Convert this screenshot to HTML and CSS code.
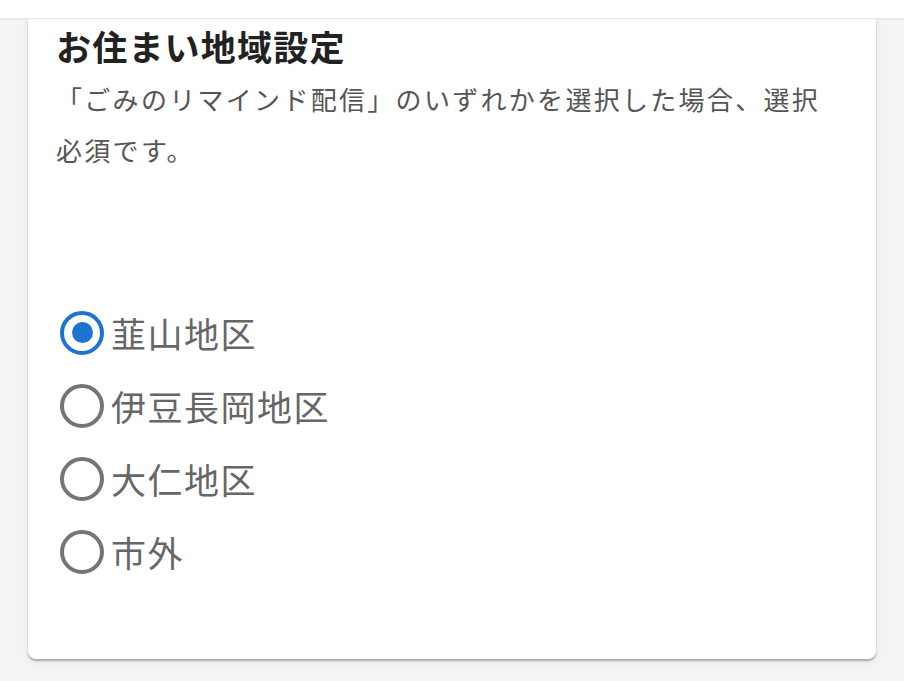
FILE: index.html
```html
<!DOCTYPE html>
<html lang="ja">
<head>
<meta charset="utf-8">
<link rel="stylesheet" href="styles.css">
</head>
<body>
<div class="topbar"></div>
<main class="page">
  <section class="card">
    <h2 class="title">お住まい地域設定</h2>
    <p class="desc">「ごみのリマインド配信」のいずれかを選択した場合、選択必須です。</p>
    <div class="options">
      <label class="option"><span class="radio checked"></span><span class="label">韮山地区</span></label>
      <label class="option"><span class="radio"></span><span class="label">伊豆長岡地区</span></label>
      <label class="option"><span class="radio"></span><span class="label">大仁地区</span></label>
      <label class="option"><span class="radio"></span><span class="label">市外</span></label>
    </div>
  </section>
</main>
</body>
</html>
```
FILE: styles.css
```css
html, body {
  margin: 0;
  padding: 0;
}
body {
  background: #f3f4f6;
  font-family: "Noto Sans CJK JP", "Noto Sans", sans-serif;
  width: 904px;
  height: 681px;
  overflow: hidden;
}
.topbar {
  height: 18px;
  background: #ffffff;
  border-bottom: 1px solid #e6e7ea;
  box-shadow: 0 1px 2px rgba(0,0,0,0.04);
  position: relative;
  z-index: 1;
}
.page {
  padding: 0 28px;
}
.card {
  background: #ffffff;
  border-radius: 0 0 8px 8px;
  box-shadow: 0 2px 2px rgba(0,0,0,0.28), 0 3px 8px rgba(0,0,0,0.06);
  padding: 7px 40px 70px 28px;
  height: 640px;
  box-sizing: border-box;
}
.title {
  margin: 0;
  font-size: 35px;
  line-height: 40px;
  font-weight: 700;
  color: #222222;
  letter-spacing: 1.2px;
}
.desc {
  margin: 7px 0 0 0;
  font-size: 26px;
  line-height: 51px;
  color: #555555;
  letter-spacing: 2.3px;
}
.options {
  margin-top: 121px;
  display: flex;
  flex-direction: column;
}
.option {
  height: 73px;
  display: flex;
  align-items: center;
  gap: 7px;
}
.radio {
  width: 44px;
  height: 44px;
  box-sizing: border-box;
  border: 4.5px solid #757575;
  border-radius: 50%;
  display: flex;
  align-items: center;
  justify-content: center;
  margin-left: 4px;
}
.radio.checked {
  border-color: #1e73d2;
}
.radio.checked::after {
  content: "";
  width: 21px;
  height: 21px;
  border-radius: 50%;
  background: #1e73d2;
}
.label {
  font-size: 35px;
  line-height: 40px;
  color: #666666;
  letter-spacing: 1.5px;
}
```
